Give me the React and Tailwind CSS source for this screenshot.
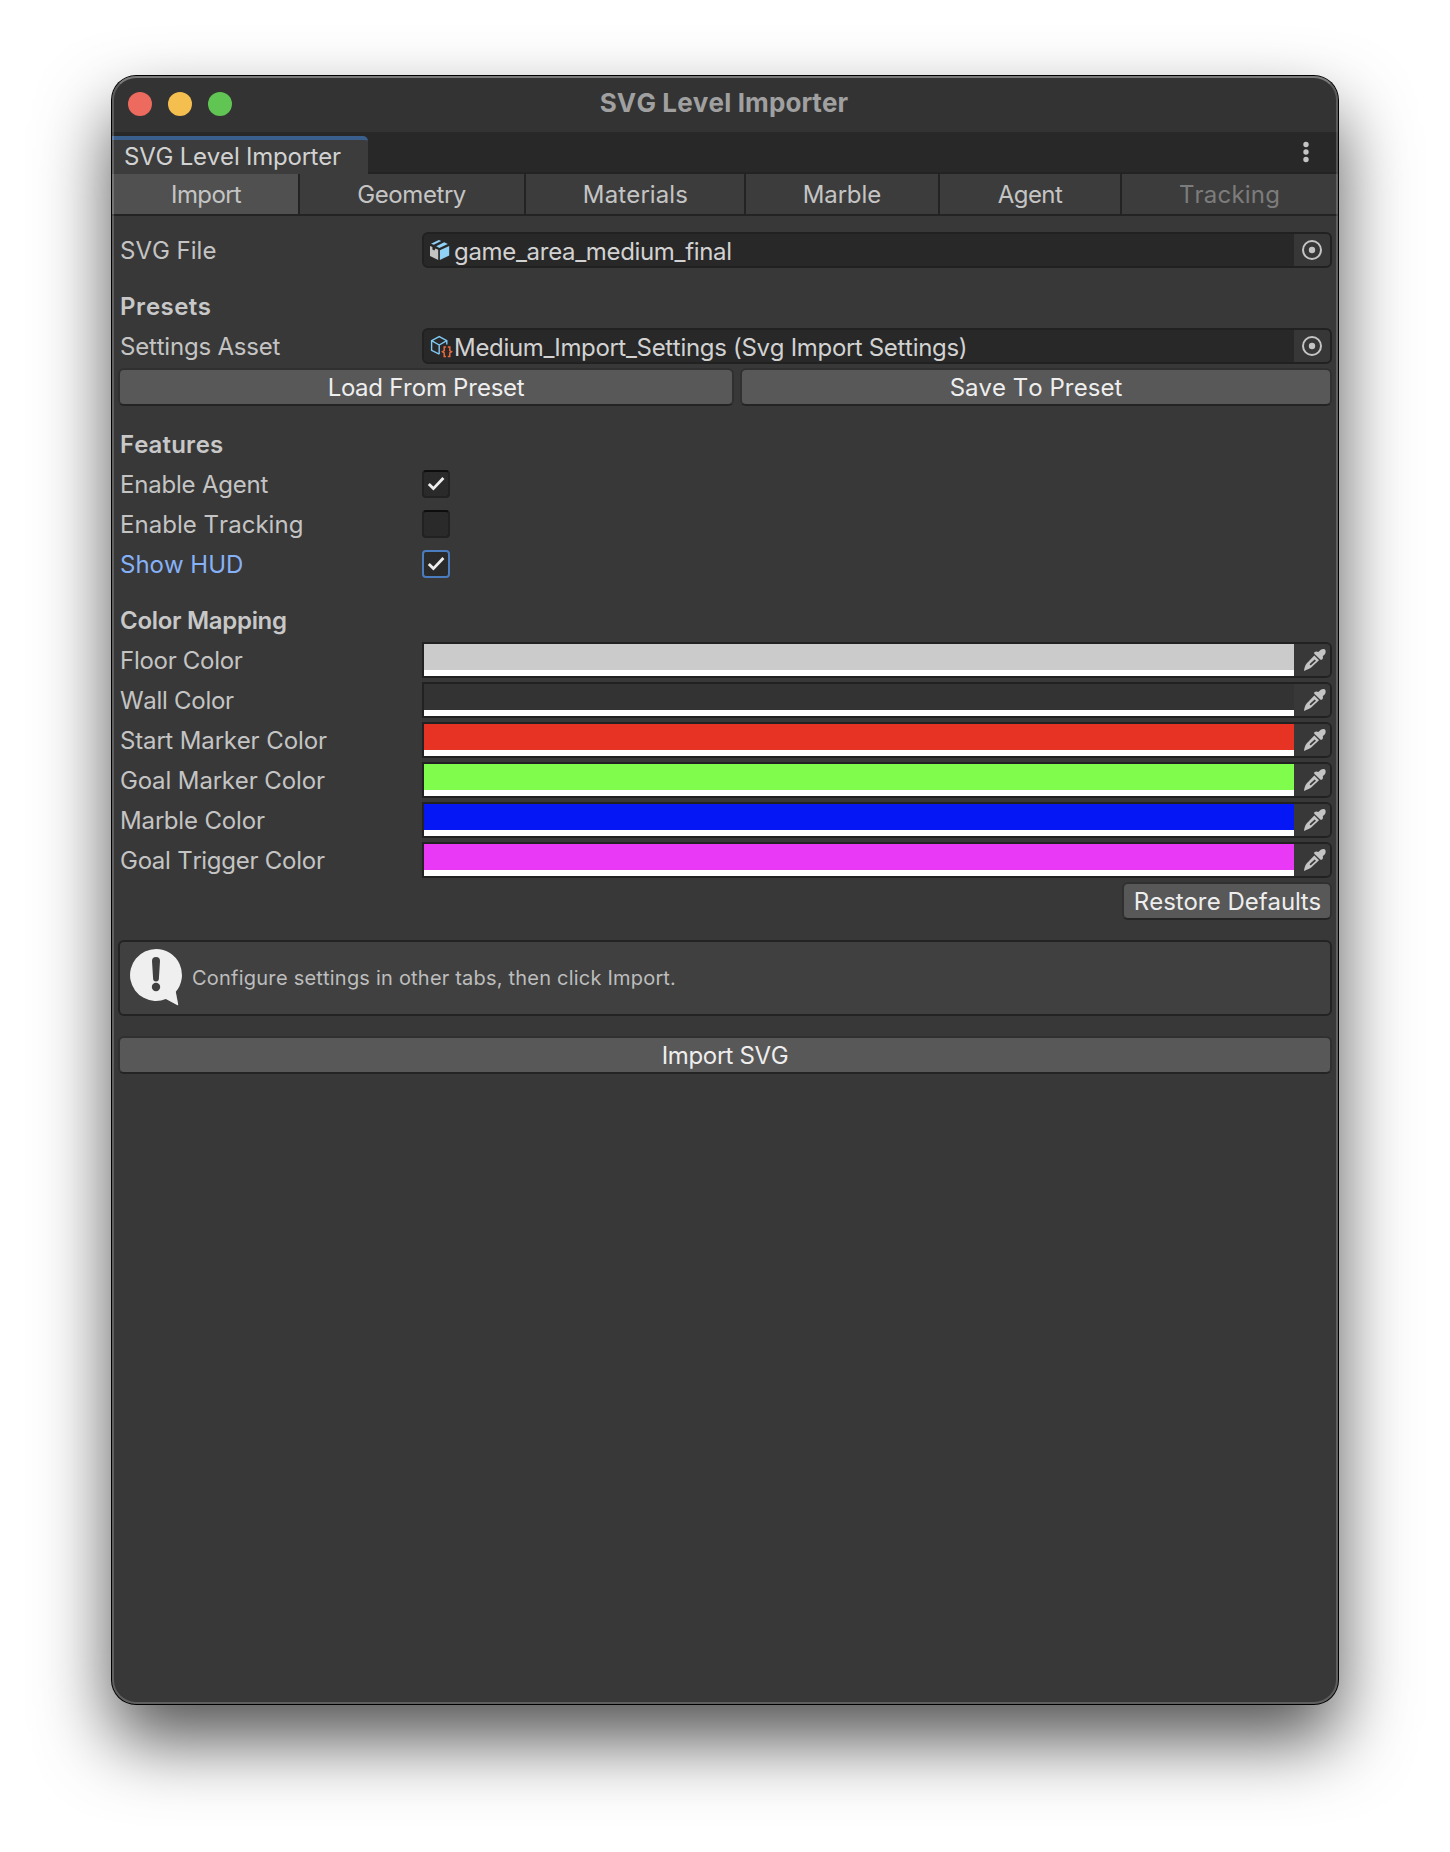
import React from "react";

function Header({ track, children }) {
  return <div className={`mt-4 flex h-9 items-center pl-[6px] pt-[2px] font-semibold text-[#c8c8c8] ${track}`}>{children}</div>;
}

function Row({ label, track, tone = "text-[#c4c4c4]", children }) {
  return (
    <div className="flex h-9 items-center">
      <span className={`w-[308px] shrink-0 pl-[6px] pt-[2px] ${track} ${tone}`}>{label}</span>
      {children}
    </div>
  );
}

function ObjectField({ icon, track, children }) {
  return (
    <div className="flex h-9 flex-1 overflow-hidden rounded-[6px] border-2 border-[#212121] bg-[#282828]">
      <div className="flex flex-1 items-center pl-[5px] text-[#d2d2d2]">
        {icon}
        <span className={`ml-[3px] pt-1 ${track}`}>{children}</span>
      </div>
      <div className="flex w-9 items-center justify-center bg-[#373737]">
        <svg width="20" height="20" viewBox="0 0 20 20" fill="none">
          <circle cx="10" cy="10" r="9" stroke="#c4c4c4" strokeWidth="2" />
          <circle cx="10" cy="10" r="3.2" fill="#c4c4c4" />
        </svg>
      </div>
    </div>
  );
}

function PrefabIcon() {
  return (
    <svg width="22" height="22" viewBox="0 0 22 22" className="shrink-0">
      <path d="M1 6.9 3.4 8V10.4L5.4 11.6 6.4 9.4 9.2 10.8V21L1 16.9Z" fill="#c4c4c4" />
      <path d="M10.9 11.2 20.2 7v9.6L10.9 21Z" fill="#8fd1f7" />
      <path d="M2 4.7 9.8 1 12.2 2 4.8 5.8Z" fill="#8fd1f7" />
      <path d="M7.2 7.2 15.2 3.3 18.8 4.9 10.4 9Z" fill="#8fd1f7" />
    </svg>
  );
}

function AssetIcon() {
  return (
    <svg width="22" height="22" viewBox="0 0 22 22" fill="none" className="shrink-0 overflow-visible">
      <path d="M10.2 19.2 2.6 15.4V5.6L10.2 1.6l7.6 4v3.8M2.6 5.6l7.6 4.4 7.6-4.4M10.2 10v9.2" stroke="#7fc8f2" strokeWidth="1.4" />
      <path
        d="M17 12H15.2V15.6L13.4 16.8 15.2 18V21.4H17M18.8 12H20.8V15.6L22.6 16.8 20.8 18V21.4H18.8"
        stroke="#e8683c"
        strokeWidth="1.5"
      />
    </svg>
  );
}

function Dropper() {
  return (
    <svg width="22" height="22" viewBox="0 0 22 22" className="ml-[6px]">
      <path
        fill="#c4c4c4"
        d="M16.8.8C18.4-.1 20.6-.1 21.2.7 21.9 1.5 21.8 4.3 20.6 5.6L18.7 7.3C19.2 8.3 19.1 9.4 18.3 10.3 17.6 11 16.7 11 16 10.3L10.5 5C9.9 4.3 10 3.5 10.7 2.9 11.7 2.2 13.2 2.2 14.3 3Z"
      />
      <path
        fill="#c4c4c4"
        fillRule="evenodd"
        d="M10.3 6.6 15 11.2 7.2 18.6C5.9 19.8 3.7 20.3.6 21.8.2 21.9 0 21.7 0 21.3.7 18.4 1 16.3 2.6 14.5ZM10.7 10.6 6.5 14.3C5.2 15.7 5.8 16.9 7.5 15.7L11.9 11.7Z"
      />
    </svg>
  );
}

function ColorRow({ label, track, fill }) {
  return (
    <Row label={label} track={track}>
      <div className="flex h-9 flex-1 rounded-r-[6px] border-2 border-[#212121]">
        <div className="flex flex-1 flex-col">
          <div className={`h-[26px] ${fill}`} />
          <div className="h-[6px] bg-white" />
        </div>
        <div className="flex w-9 items-center justify-center rounded-r-[4px] bg-[#383838]">
          <Dropper />
        </div>
      </div>
    </Row>
  );
}

function Check({ checked, focused }) {
  return (
    <span
      className={`flex size-7 items-center justify-center rounded-[4px] border-2 bg-[#2a2a2a] ${
        focused ? "border-[#4a7dbf]" : "border-[#212121] border-t-[#0d0d0d]"
      }`}
    >
      {checked && (
        <svg width="18" height="16" viewBox="0 0 18 16" fill="none">
          <path d="M1.8 8 6.4 12.6 16.4 2" stroke="#eeeeee" strokeWidth="2.8" />
        </svg>
      )}
    </span>
  );
}

function Button({ className = "", children }) {
  return (
    <button
      className={`flex h-[38px] items-center justify-center rounded-[6px] border-2 border-[#303030] border-b-[#242424] bg-[#585858] pt-[2px] text-[#eeeeee] ${className}`}
    >
      {children}
    </button>
  );
}

function InfoIcon() {
  return (
    <svg width="52" height="57" viewBox="0 0 52 57" className="mb-[1px] shrink-0">
      <path
        d="M26 0A26 26 0 0 1 45.8 42.8L48.2 55.2C48.3 56.1 47.8 56.4 47 56L35.8 50.1A26 26 0 1 1 26 0Z"
        fill="#efefef"
      />
      <path d="M22 12a4 4 0 0 1 8 0L28.9 29.6a2.9 2.9 0 0 1-5.8 0Z" fill="#404040" />
      <circle cx="26" cy="38" r="4.2" fill="#404040" />
    </svg>
  );
}

const tabs = [
  { name: "Import", box: "w-[186px] bg-[#505050] text-[#c4c4c4] pl-[2px] tracking-[-0.58px]" },
  { name: "Geometry", box: "w-[226px] bg-[#3c3c3c] text-[#c4c4c4] border-l-2 pr-[1px] tracking-[-0.38px]" },
  { name: "Materials", box: "w-[220px] bg-[#3c3c3c] text-[#c4c4c4] border-l-2 pl-[1px] tracking-[0.17px]" },
  { name: "Marble", box: "w-[194px] bg-[#3c3c3c] text-[#c4c4c4] border-l-2" },
  { name: "Agent", box: "w-[182px] bg-[#3c3c3c] text-[#c4c4c4] border-l-2 tracking-[-0.6px]" },
  { name: "Tracking", box: "flex-1 bg-[#3c3c3c] text-[#7c7c7c] border-l-2 pr-[1px] tracking-[0.2px]" },
];

const colors = [
  { label: "Floor Color", track: "tracking-[-0.28px]", fill: "bg-[#cbcbcb]" },
  { label: "Wall Color", track: "tracking-[-0.28px]", fill: "bg-[#333333]" },
  { label: "Start Marker Color", track: "tracking-[-0.1px]", fill: "bg-[#e73323]" },
  { label: "Goal Marker Color", track: "tracking-[-0.1px]", fill: "bg-[#7ffc4c]" },
  { label: "Marble Color", track: "tracking-[-0.14px]", fill: "bg-[#0617f5]" },
  { label: "Goal Trigger Color", track: "tracking-[-0.24px]", fill: "bg-[#e939f6]" },
];

export default function App() {
  return (
    <div className="h-[1852px] w-[1450px] overflow-hidden bg-white pl-28 pt-19 font-['Inter','Liberation_Sans',sans-serif] text-[24px] leading-none whitespace-nowrap [font-kerning:none]">
      <div className="relative flex h-[1628px] w-[1226px] flex-col rounded-[24px] bg-[#383838] shadow-[0_0_0_1px_#000,0_36px_72px_rgba(0,0,0,0.68)]">
        <div className="relative flex h-14 shrink-0 items-center gap-4 rounded-t-[24px] bg-[#333333] pl-4">
          <span className="size-6 rounded-full bg-[#ec6a5e]" />
          <span className="size-6 rounded-full bg-[#f4bf4f]" />
          <span className="size-6 rounded-full bg-[#61c554]" />
          <div className="absolute inset-x-0 top-[14px] pr-[2px] text-center text-[26px] font-bold tracking-[0.14px] text-[#a0a0a0]">
            SVG Level Importer
          </div>
        </div>

        <div className="flex h-[42px] shrink-0 items-end bg-[#282828]">
          <div className="flex h-[38px] w-[256px] items-center rounded-tr-[5px] border-t-4 border-t-[#3a5f8c] bg-[#3c3c3c] pl-3 tracking-[-0.22px] text-[#d2d2d2]">
            SVG Level Importer
          </div>
          <div className="flex h-full flex-1 justify-end border-b-2 border-[#232323] pr-[29px] pt-[9px]">
            <svg width="6" height="22" viewBox="0 0 6 22" fill="#c4c4c4">
              <circle cx="3" cy="3.5" r="2.7" />
              <circle cx="3" cy="11" r="2.7" />
              <circle cx="3" cy="18.5" r="2.7" />
            </svg>
          </div>
        </div>

        <div className="flex h-[42px] shrink-0 border-b-2 border-[#232323]">
          {tabs.map((t) => (
            <div key={t.name} className={`flex items-center justify-center border-[#232323] pt-[1px] ${t.box}`}>
              {t.name}
            </div>
          ))}
        </div>

        <div className="flex flex-col gap-1 pr-[6px] pl-[2px] pt-4">
          <Row label="SVG File">
            <ObjectField icon={<PrefabIcon />} track="tracking-[-0.33px]">game_area_medium_final</ObjectField>
          </Row>

          <Header track="tracking-[0.44px]">Presets</Header>
          <Row label="Settings Asset" track="tracking-[-0.2px]">
            <ObjectField icon={<AssetIcon />} track="tracking-[-0.3px]">Medium_Import_Settings (Svg Import Settings)</ObjectField>
          </Row>
          <div className="flex gap-[6px] pl-1">
            <Button className="w-[616px] tracking-[-0.28px]">Load From Preset</Button>
            <Button className="flex-1">Save To Preset</Button>
          </div>

          <Header track="tracking-[0.15px]">Features</Header>
          <Row label="Enable Agent" track="tracking-[-0.2px]"><Check checked /></Row>
          <Row label="Enable Tracking" track="tracking-[0.03px]"><Check /></Row>
          <Row label="Show HUD" track="tracking-[0px]" tone="text-[#87b1f7]"><Check checked focused /></Row>

          <Header track="tracking-[-0.3px]">Color Mapping</Header>
          {colors.map((c) => (
            <ColorRow key={c.label} {...c} />
          ))}
          <Button className="w-[210px] self-end pr-0 pl-[1px] tracking-[-0.06px]">Restore Defaults</Button>

          <div className="mt-4 ml-1 flex h-[76px] items-center rounded-[6px] border-2 border-[#232323] bg-[#404040] pl-[10px] text-[20px] tracking-[0.21px] text-[#bdbdbd]">
            <InfoIcon />
            <span className="pl-[10px]">Configure settings in other tabs, then click Import.</span>
          </div>

          <Button className="mt-4 ml-1 tracking-[-0.36px]">Import SVG</Button>
        </div>
        <div className="pointer-events-none absolute inset-0 rounded-[24px] border-2 border-white/20 border-t-white/35" />
      </div>
    </div>
  );
}
